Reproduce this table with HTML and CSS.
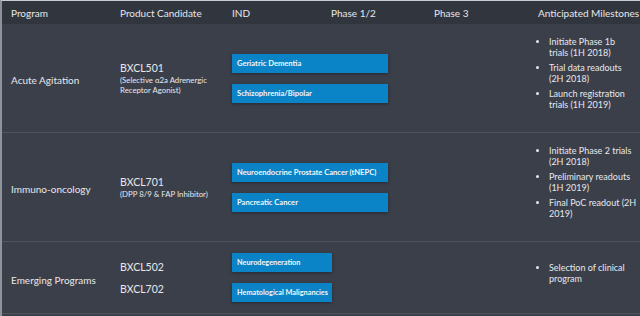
FILE: index.html
```
<!DOCTYPE html>
<html lang="en">
<head>
    <meta charset="UTF-8">
    <meta name="viewport" content="width=device-width, initial-scale=1.0">
    <title>Pipeline</title>
    <link rel="stylesheet" href="styles.css">
</head>
<body>
    <div class="pipeline">
        <div class="row head">
            <div class="cell">Program</div>
            <div class="cell">Product Candidate</div>
            <div class="cell">IND</div>
            <div class="cell">Phase 1/2</div>
            <div class="cell">Phase 3</div>
            <div class="cell">Anticipated Milestones</div>
        </div>

        <div class="row">
            <div class="cell program">Acute Agitation</div>
            <div class="cell product">
                <span class="code">BXCL501</span>
                <span class="desc">(Selective α2a Adrenergic Receptor Agonist)</span>
            </div>
            <div class="cell bars">
                <div class="bar long">Geriatric Dementia</div>
                <div class="bar long">Schizophrenia/Bipolar</div>
            </div>
            <div class="cell milestones">
                <ul>
                    <li>Initiate Phase 1b<br>trials (1H 2018)</li>
                    <li>Trial data readouts<br>(2H 2018)</li>
                    <li>Launch registration<br>trials (1H 2019)</li>
                </ul>
            </div>
        </div>

        <div class="row">
            <div class="cell program">Immuno-oncology</div>
            <div class="cell product">
                <span class="code">BXCL701</span>
                <span class="desc">(DPP 8/9 &amp; FAP Inhibitor)</span>
            </div>
            <div class="cell bars">
                <div class="bar long">Neuroendocrine Prostate Cancer (tNEPC)</div>
                <div class="bar long">Pancreatic Cancer</div>
            </div>
            <div class="cell milestones">
                <ul>
                    <li>Initiate Phase 2 trials<br>(2H 2018)</li>
                    <li>Preliminary readouts<br>(1H 2019)</li>
                    <li>Final PoC readout (2H<br>2019)</li>
                </ul>
            </div>
        </div>

        <div class="row short">
            <div class="cell program">Emerging Programs</div>
            <div class="cell product pair">
                <span class="code">BXCL502</span>
                <span class="code">BXCL702</span>
            </div>
            <div class="cell bars">
                <div class="bar">Neurodegeneration</div>
                <div class="bar">Hematological Malignancies</div>
            </div>
            <div class="cell milestones">
                <ul>
                    <li>Selection of clinical<br>program</li>
                </ul>
            </div>
        </div>
    </div>
</body>
</html>
```

FILE: styles.css
```
body {
    margin: 0;
    background: #3b3f4a;
    font-family: Lato, "Open Sans", sans-serif;
    color: #e6e8ec;
}
.pipeline {
    width: 640px;
    height: 316px;
    border-top: 1px solid #c9ccd1;
    border-left: 2px solid #8e929a;
    box-sizing: border-box;
}
.row {
    display: grid;
    grid-template-columns: 108px 112px 99px 103px 104px 112px;
    height: 108px;
    border-bottom: 1px solid #4d525d;
    align-items: center;
}
.row.head {
    height: 23px;
    background: #31353e;
    font-size: 10px;
    border-bottom: none;
}
.row.short {
    height: 71px;
}
.cell {
    padding-left: 10px;
}
.row.head .cell:first-child,
.program {
    padding-left: 9px;
}
.program {
    font-size: 10px;
    padding-top: 4px;
}
.product {
    display: flex;
    flex-direction: column;
}
.code {
    font-size: 10.5px;
    line-height: 14px;
}
.desc {
    font-size: 7.8px;
    line-height: 10px;
    padding-right: 4px;
}
.product.pair {
    gap: 8px;
}
.bars {
    grid-column: span 3;
    display: flex;
    flex-direction: column;
    gap: 11px;
}
.bar {
    width: 100px;
    height: 19px;
    line-height: 19px;
    padding-left: 5px;
    box-sizing: border-box;
    background: #0a84c6;
    color: #f2f6fa;
    font-size: 7.3px;
    font-weight: bold;
    white-space: nowrap;
    overflow: hidden;
    box-shadow: 0 1px 3px rgba(0, 0, 0, 0.35);
}
.bar.long {
    width: 156px;
    font-size: 7.6px;
}
.milestones {
    padding-bottom: 10px;
}
.milestones ul {
    margin: 0;
    padding-left: 11px;
    font-size: 9px;
    line-height: 11px;
    white-space: nowrap;
}
.milestones li {
    margin-bottom: 4px;
}
.milestones li:last-child {
    margin-bottom: 0;
}
```
